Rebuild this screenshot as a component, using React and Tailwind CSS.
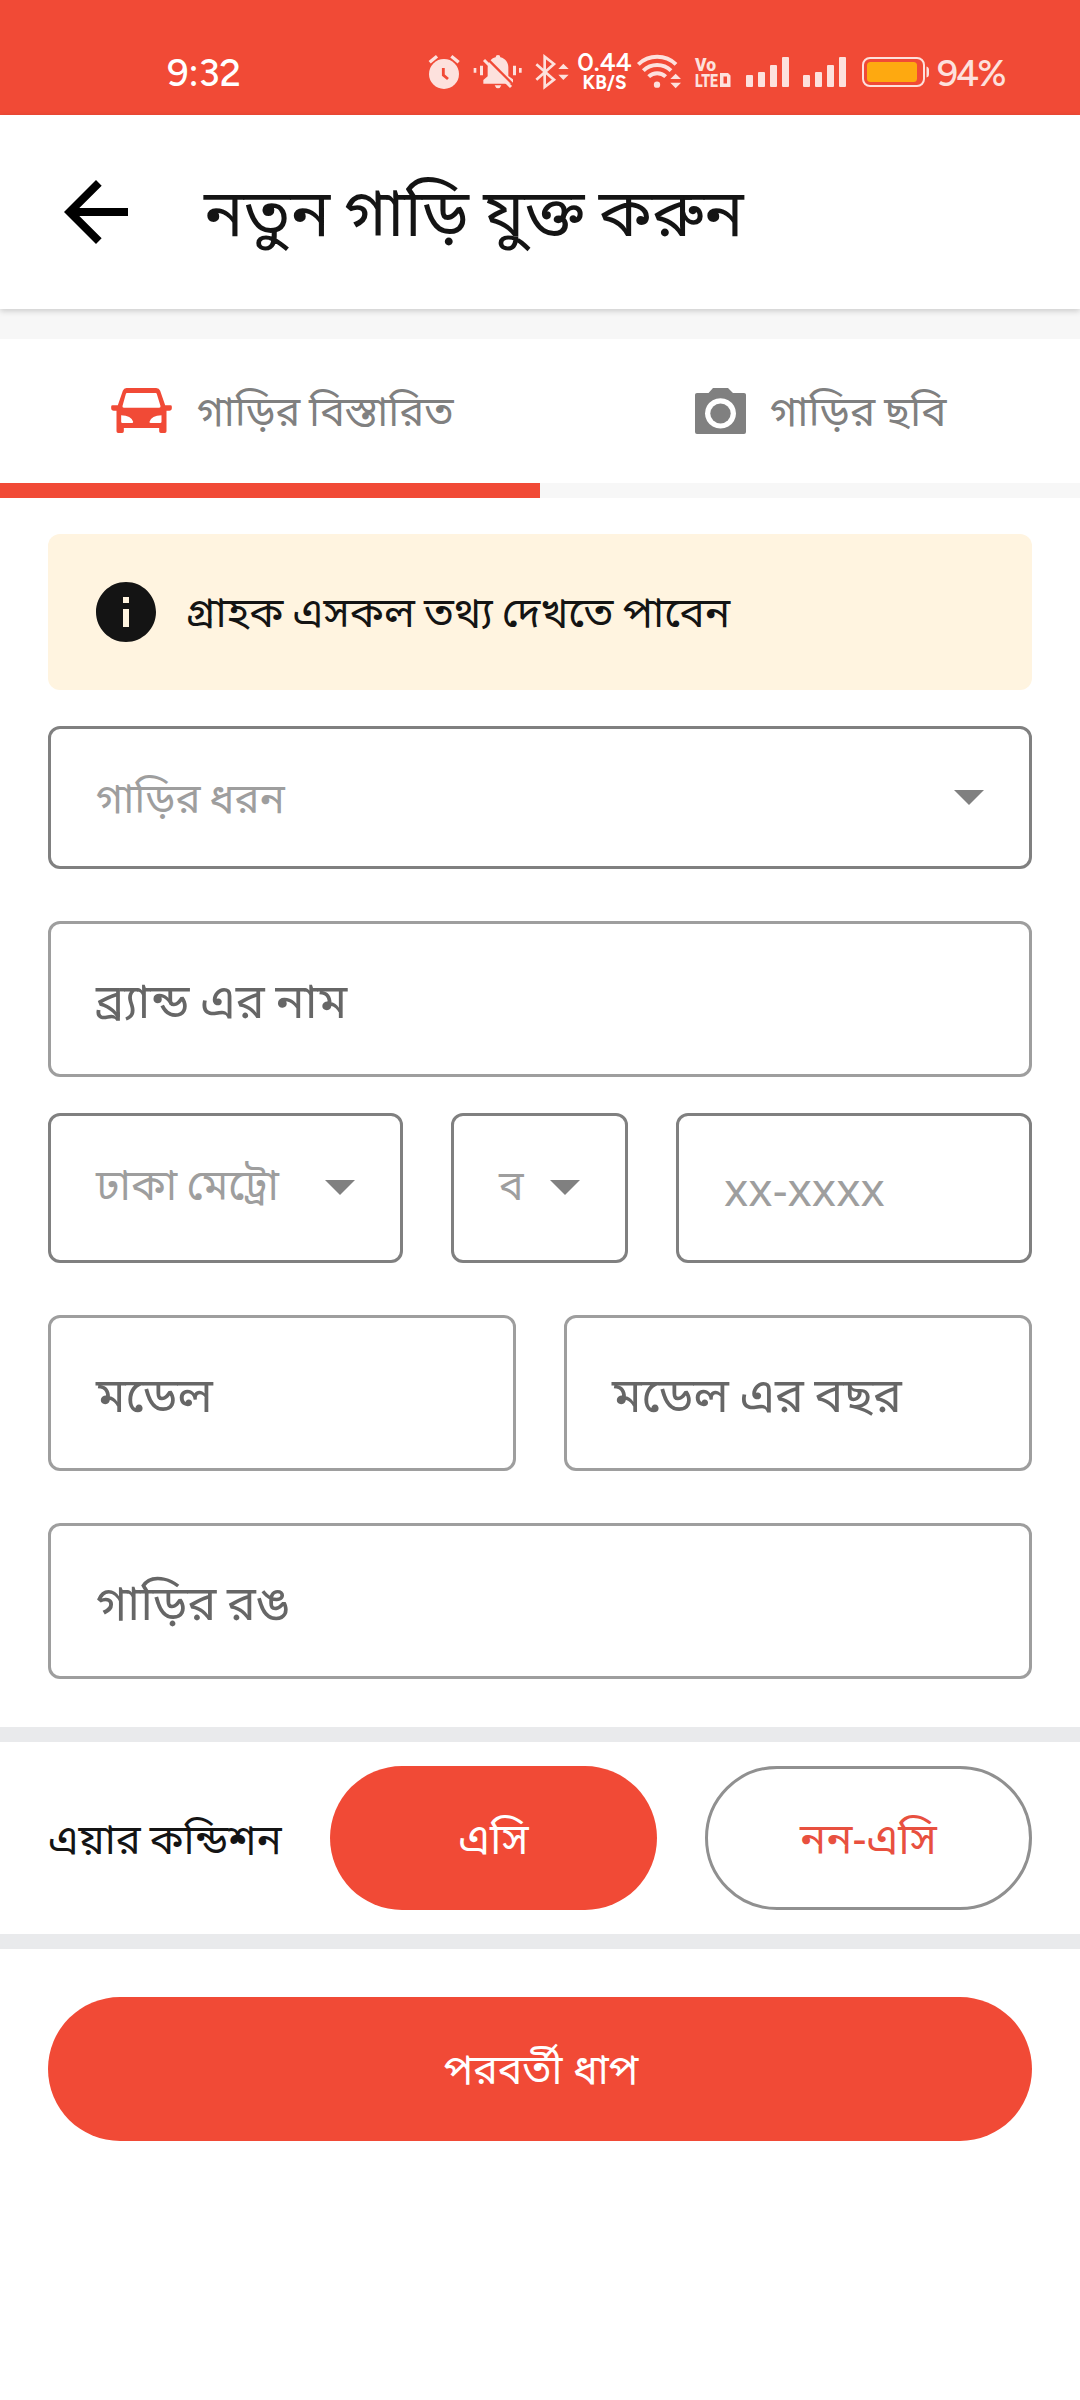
const PALE = '#fde1dd';

/* Zero-width strut: its bottom edge fixes the baseline of a row. */
function Strut({ h }) {
  return <span className={'w-0 shrink-0 ' + h} />;
}

function AlarmIcon() {
  return (
    <svg className="self-start mt-[53px] ml-[185px] shrink-0" width="36" height="37" viewBox="15 9 108 111" fill={PALE}>
      <circle cx="69" cy="72" r="45" />
      <path d="M26 37 L48 19 M113 37 L91 19" stroke={PALE} strokeWidth="10" />
      <path d="M67 54 V75 L81 87" stroke="#f14a36" strokeWidth="8.500" fill="none" />
    </svg>
  );
}

function BellOffIcon() {
  return (
    <svg className="self-start mt-[54px] ml-[11px] shrink-0" width="50" height="35" viewBox="156 12 150 105" fill={PALE}>
      <path d="M224 22 Q224 15 231 15 Q238 15 238 22 C254 26 262 38 262 52 V78 L276 88 V101 H187 V90 L200 79 V54 C200 38 210 25 224 22Z" />
      <path d="M221 106 H241 Q238 115 231 115 Q224 115 221 106Z" />
      <path d="M189 30 L270 111" stroke={PALE} strokeWidth="9" />
      <path d="M198 25 L281 108" stroke="#f14a36" strokeWidth="7" />
      <path d="M158 54h8v14h-8z M177 47h9v29h-9z M276 47h9v29h-9z M294 54h8v14h-8z" />
    </svg>
  );
}

function BluetoothIcon() {
  return (
    <svg className="self-start mt-[54px] ml-[12px] shrink-0" width="36" height="37" viewBox="342 12 108 111" fill="none" stroke={PALE} strokeWidth="8">
      <path d="M346 43 L399 89 L371 111 V20 L399 42 L346 89" />
      <path d="M412 57 L427 41 L443 57Z M412 74 L427 90 L443 74Z" fill={PALE} stroke="none" />
    </svg>
  );
}

function WifiIcon() {
  return (
    <svg className="self-start mt-[52px] ml-[5px] shrink-0" width="46" height="38" viewBox="229 21 138 114" fill="none" stroke={PALE} strokeWidth="12">
      <path d="M236 58 A82 82 0 0 1 349 58" />
      <path d="M251 77 A60 60 0 0 1 334 77" />
      <path d="M267 95 A37 37 0 0 1 318 95" />
      <circle cx="292" cy="119" r="9.500" fill={PALE} stroke="none" />
      <path d="M332 102 L348 86 L364 102Z M332 113 L348 130 L364 113Z" fill={PALE} stroke="none" />
    </svg>
  );
}

function VolteIcon() {
  return (
    <svg className="self-start mt-[56px] ml-[13px] shrink-0 overflow-visible" width="36" height="32" viewBox="0 0 36 32" fill={PALE} fontFamily="Roboto, sans-serif" fontWeight="900">
      <text x="0" y="14.500" fontSize="18" textLength="21" lengthAdjust="spacingAndGlyphs">Vo</text>
      <text x="0" y="31" fontSize="19" textLength="23" lengthAdjust="spacingAndGlyphs">LTE</text>
      <path d="M25 17 H33 L35.500 19.500 V31 H25Z M28.500 20.500 V27.500 H32 V20.500Z" fillRule="evenodd" />
    </svg>
  );
}

function SignalIcon({ className }) {
  return (
    <svg className={'self-start mt-[57px] shrink-0 ' + className} width="43" height="30" viewBox="0 0 43 30" fill={PALE}>
      <rect x="0" y="18" width="7" height="12" rx="1" />
      <rect x="12" y="15" width="7" height="15" rx="1" />
      <rect x="24" y="8" width="7" height="22" rx="1" />
      <rect x="36" y="0" width="7" height="30" rx="1" />
    </svg>
  );
}

function BatteryIcon() {
  return (
    <svg className="self-start mt-[57px] ml-[16px] shrink-0" width="68" height="30" viewBox="0 0 68 30">
      <rect x="1" y="1" width="61" height="28" rx="7" fill="none" stroke={PALE} strokeWidth="2" />
      <rect x="5" y="5" width="50" height="20" rx="3.500" fill="#fea910" />
      <path d="M64.500 9.500 Q67 10 67 13 V17 Q67 20 64.500 20.500Z" fill={PALE} />
    </svg>
  );
}

function StatusBar() {
  return (
    <div className="h-[115px] bg-[#f14a36] flex items-baseline font-['Figtree',Lato,sans-serif] leading-none text-white">
      <Strut h="h-[86px]" />
      <span className="ml-[167px] w-[74px] text-[38px] font-medium whitespace-nowrap">9:32</span>
      <AlarmIcon />
      <BellOffIcon />
      <BluetoothIcon />
      <div className="self-start mt-[51px] ml-[7px] w-[53px] flex flex-col items-center font-semibold">
        <span className="text-[25.5px] leading-[22px] whitespace-nowrap">0.44</span>
        <span className="text-[19px] leading-[19px] whitespace-nowrap font-bold">KB/S</span>
      </div>
      <WifiIcon />
      <VolteIcon />
      <SignalIcon className="ml-[15px]" />
      <SignalIcon className="ml-[14px]" />
      <BatteryIcon />
      <span className="ml-[7px] text-[37px] font-medium text-[#fde1dd] whitespace-nowrap tracking-[-2px]">94%</span>
    </div>
  );
}

function CarIcon() {
  return (
    <svg className="self-start mt-[49px] ml-[111px] shrink-0" width="61" height="45" viewBox="64 54 182 135" fill="#f14a36" fillRule="evenodd">
      <path d="M110 54 H199 Q208 54 211 62 L226 106 H242 Q246 106 246 110 V114 Q246 122 238 122 H230 V184 Q230 189 225 189 H213 Q208 189 208 184 V174 H102 V184 Q102 189 97 189 H85 Q80 189 80 184 V122 H72 Q64 122 64 114 V110 Q64 106 68 106 H84 L99 62 Q102 54 110 54Z M111 69 Q109 69 108 72 L98 108 Q97 113 102 113 H208 Q213 113 212 108 L201 72 Q200 69 198 69Z M94 136 V155 Q94 159 98 159 H126 Q131 159 130 155 Q124 137 94 136Z M215 136 V155 Q215 159 211 159 H183 Q178 159 179 155 Q185 137 215 136Z" />
    </svg>
  );
}

function CameraIcon() {
  return (
    <svg className="self-start mt-[49px] ml-[155px] shrink-0" width="51" height="46" viewBox="0 0 51 47" preserveAspectRatio="none" fill="#808080">
      <path fillRule="evenodd" d="M18 0 H33 L38 5 H49 Q51 5 51 7 V45 Q51 47 49 47 H2 Q0 47 0 45 V7 Q0 5 2 5 H13.500Z M25.500 10.500 a15.500 15.500 0 1 0 0.010 0Z" />
      <circle cx="25.500" cy="26" r="10.200" />
    </svg>
  );
}

function Triangle({ className }) {
  return (
    <svg className={'self-start shrink-0 ' + className} width="30" height="15" viewBox="0 0 10 5" fill="#808080">
      <path d="M0 0 L5 5 L10 0Z" />
    </svg>
  );
}

export default function App() {
  return (
    <div className="w-[1080px] h-[2400px] bg-white overflow-hidden flex flex-col font-['Noto_Sans_Bengali','Noto_Sans',sans-serif] leading-none text-[#141414] text-[41.25px] [word-spacing:-0.045em] whitespace-nowrap">
      <StatusBar />
      <header className="relative h-[194px] shrink-0 bg-white flex items-baseline shadow-[0_2px_6px_rgba(0,0,0,0.18)]">
        <Strut h="h-[121px]" />
        <svg className="self-start mt-[49px] ml-[48px] shrink-0" width="96" height="96" viewBox="0 0 24 24" fill="#000">
          <path d="M20 11H7.830l5.590-5.590L12 4l-8 8 8 8 1.410-1.410L7.830 13H20v-2z" />
        </svg>
        <h1 className="ml-[60px] text-[66px] [word-spacing:-3px]">নতুন গাড়ি যুক্ত করুন</h1>
      </header>
      <div className="h-[30px] shrink-0 bg-[#f7f7f7]" />
      <nav className="grid grid-cols-2 h-[159px] shrink-0 text-[#808080]">
        <div className="flex items-baseline border-b-[15px] border-[#f14a36]">
          <Strut h="h-[87px]" />
          <CarIcon />
          <span className="ml-[25px] text-[41.5px]">গাড়ির বিস্তারিত</span>
        </div>
        <div className="flex items-baseline border-b-[15px] border-[#f7f7f7]">
          <Strut h="h-[87px]" />
          <CameraIcon />
          <span className="ml-[24px] text-[42.3px]">গাড়ির ছবি</span>
        </div>
      </nav>

      <main className="px-12 pt-9 flex flex-col shrink-0">
        <div className="h-[156px] rounded-xl bg-[#fff4e0] flex items-baseline">
          <Strut h="h-[93px]" />
          <svg className="self-start mt-[42px] ml-[42px] shrink-0" width="72" height="72" viewBox="0 0 24 24" fill="#141414">
            <path d="M12 2C6.480 2 2 6.480 2 12s4.480 10 10 10 10-4.480 10-10S17.520 2 12 2zm1 15h-2v-6h2v6zm0-8h-2V7h2v2z" />
          </svg>
          <span className="ml-[24px] text-[42.3px]">গ্রাহক এসকল তথ্য দেখতে পাবেন</span>
        </div>

        <div className="mt-9 h-[143px] rounded-xl border-3 border-[#808080] flex items-baseline">
          <Strut h="h-[84px]" />
          <span className="ml-[45px] text-[#9e9e9e] text-[42px]">গাড়ির ধরন</span>
          <Triangle className="mt-[61px] ml-auto mr-[45px]" />
        </div>

        <div className="mt-[52px] h-[156px] rounded-xl border-3 border-[#9e9e9e] flex items-baseline text-[48.4px] text-[#666]">
          <Strut h="h-[94px]" />
          <span className="ml-[45px] text-[48.6px]">ব্র্যান্ড এর নাম</span>
        </div>

        <div className="mt-9 h-[150px] flex gap-12">
          <div className="w-[355px] rounded-xl border-3 border-[#808080] flex items-baseline">
            <Strut h="h-[84px]" />
            <span className="ml-[45px] text-[#9e9e9e] text-[43px]">ঢাকা মেট্রো</span>
            <Triangle className="mt-[64px] ml-auto mr-[45px]" />
          </div>
          <div className="w-[177px] rounded-xl border-3 border-[#808080] flex items-baseline">
            <Strut h="h-[84px]" />
            <span className="ml-[45px] text-[#9e9e9e]">ব</span>
            <Triangle className="mt-[64px] ml-auto mr-[45px]" />
          </div>
          <div className="flex-1 rounded-xl border-3 border-[#808080] flex items-baseline">
            <Strut h="h-[90px]" />
            <span className="ml-[45px] text-[#9e9e9e] text-[46px] font-['Noto_Sans',sans-serif] [word-spacing:0]">xx-xxxx</span>
          </div>
        </div>

        <div className="mt-[52px] h-[156px] grid grid-cols-2 gap-12 text-[48.4px] text-[#666]">
          <div className="rounded-xl border-3 border-[#9e9e9e] flex items-baseline">
            <Strut h="h-[94px]" />
            <span className="ml-[45px]">মডেল</span>
          </div>
          <div className="rounded-xl border-3 border-[#9e9e9e] flex items-baseline">
            <Strut h="h-[94px]" />
            <span className="ml-[45px]">মডেল এর বছর</span>
          </div>
        </div>

        <div className="mt-[52px] h-[156px] rounded-xl border-3 border-[#9e9e9e] flex items-baseline text-[48.4px] text-[#666]">
          <Strut h="h-[94px]" />
          <span className="ml-[45px]">গাড়ির রঙ</span>
        </div>
      </main>

      <section className="mt-12 h-[222px] shrink-0 border-y-[15px] border-[#e9eaec] px-12 pt-6 flex">
        <div className="w-[282px] h-[144px] flex items-baseline">
          <Strut h="h-[88px]" />
          <span className="text-[41.8px]">এয়ার কন্ডিশন</span>
        </div>
        <button className="w-[327px] h-[144px] rounded-full bg-[#f14a36] text-white flex items-baseline justify-center">
          <Strut h="h-[88px]" />
          <span className="text-[43.5px]">এসি</span>
        </button>
        <button className="ml-12 w-[327px] h-[144px] rounded-full border-3 border-[#909090] text-[#e8503f] flex items-baseline justify-center">
          <Strut h="h-[85px]" />
          <span className="text-[43.5px]">নন-এসি</span>
        </button>
      </section>

      <button className="mt-12 mx-12 h-[144px] shrink-0 rounded-full bg-[#f14a36] text-white flex items-baseline justify-center">
        <Strut h="h-[87px]" />
        <span className="pl-[2px]">পরবর্তী ধাপ</span>
      </button>
    </div>
  );
}
